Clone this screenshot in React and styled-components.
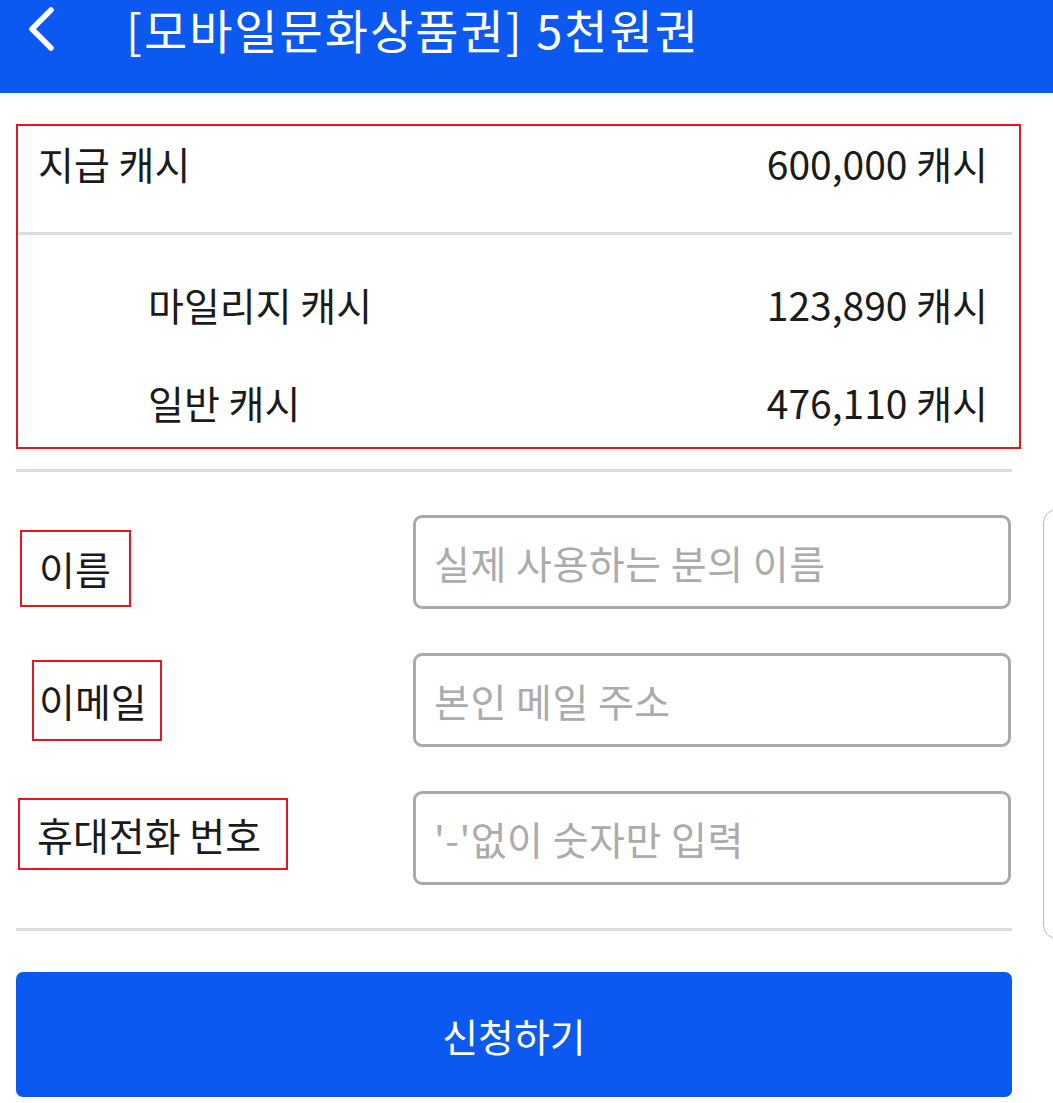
import React from 'react';
import styled, {createGlobalStyle} from 'styled-components';

const GlobalStyle = createGlobalStyle`
  html, body {
    margin: 0;
    padding: 0;
    background: #ffffff;
    overflow-x: hidden;
  }

  body {
    font-family: "Noto Sans CJK KR", "Noto Sans", sans-serif;
    color: #1b1b1b;
  }
`;

const Header = styled.header`
  display: flex;
  align-items: center;

  height: 93px;
  padding: 0 0 35px 24px;
  box-sizing: border-box;

  background: #0b59f0;
  color: #ffffff;
`;

const BackButton = styled.div`
  display: flex;
  align-items: center;
  justify-content: center;

  width: 36px;
  height: 58px;
`;

const Title = styled.h1`
  margin: 0 0 0 66px;

  font-size: 47px;
  font-weight: 400;
  line-height: 58px;
  letter-spacing: 2px;
  white-space: nowrap;
`;

const Main = styled.main`
  display: flex;
  padding-left: 16px;
`;

const Content = styled.div`
  flex: none;
  width: 996px;
`;

const SummaryBox = styled.section`
  margin: 31px -9px 0 0;
  border: 2px solid #e5161d;
`;

const Row = styled.div`
  display: flex;
  justify-content: space-between;

  padding: ${({$top}) => $top}px 31px 0 ${({$indent}) => $indent}px;
  height: ${({$height}) => $height}px;
  box-sizing: border-box;

  font-size: 39px;
  line-height: 44px;
`;

const InnerDivider = styled.div`
  margin-right: 7px;
  height: 3px;
  background: #dddddd;
`;

const Divider = styled.div`
  margin-top: ${({$top}) => $top}px;
  height: 3px;
  background: #dddddd;
`;

const Form = styled.div`
  display: flex;
  flex-direction: column;
  gap: 44px;

  margin-top: 43px;
`;

const FormRow = styled.div`
  display: grid;
  grid-template-columns: 397px 1fr;
  align-items: center;

  height: 94px;
`;

const LabelBox = styled.label`
  display: flex;
  align-items: center;

  margin: ${({$dy}) => $dy}px 0 0 ${({$dx}) => $dx}px;
  width: ${({$w}) => $w}px;
  height: ${({$h}) => $h}px;
  padding-left: ${({$pl}) => $pl}px;
  box-sizing: border-box;

  border: 2px solid #e5161d;

  font-size: 39px;
  white-space: nowrap;
`;

const Input = styled.input`
  width: 598px;
  height: 94px;
  padding: 0 18px;
  box-sizing: border-box;

  border: 3px solid #aaaaaa;
  border-radius: 9px;
  outline: none;

  font-family: "Noto Sans CJK KR", "Noto Sans", sans-serif;
  font-size: 39px;
  letter-spacing: 0.5px;
  color: #1b1b1b;

  &::placeholder {
    color: #ababab;
  }
`;

const SubmitButton = styled.button`
  display: block;

  margin-top: 41px;
  width: 100%;
  height: 125px;

  border: none;
  border-radius: 7px;
  background: #0b59f0;

  font-family: "Noto Sans CJK KR", "Noto Sans", sans-serif;
  font-size: 39px;
  color: #ffffff;
`;

const SidePeek = styled.div`
  flex: none;

  margin: 416px 0 0 31px;
  width: 40px;
  height: 428px;

  border: 1.5px solid #bbbbbb;
  border-radius: 14px;
`;

const fields = [
  {label: '이름', placeholder: '실제 사용하는 분의 이름', dx: 4, dy: 12, w: 111, h: 77, pl: 17},
  {label: '이메일', placeholder: '본인 메일 주소', dx: 16, dy: 0, w: 130, h: 81, pl: 5},
  {label: '휴대전화 번호', placeholder: "'-'없이 숫자만 입력", dx: 2, dy: -8, w: 270, h: 72, pl: 17},
];

const App = () => {
  return (
    <>
      <GlobalStyle/>
      <Header>
        <BackButton>
          <svg width="32" height="46" viewBox="0 0 32 46">
            <polyline points="25,4 6,23 25,42" fill="none" stroke="#ffffff" strokeWidth="5.5" strokeLinecap="round" strokeLinejoin="round"/>
          </svg>
        </BackButton>
        <Title>[모바일문화상품권] 5천원권</Title>
      </Header>

      <Main>
        <Content>
          <SummaryBox>
            <Row $indent={20} $top={15} $height={106}>
              <span>지급 캐시</span>
              <span>600,000 캐시</span>
            </Row>
            <InnerDivider/>
            <Row $indent={130} $top={47} $height={98}>
              <span>마일리지 캐시</span>
              <span>123,890 캐시</span>
            </Row>
            <Row $indent={130} $top={47} $height={114}>
              <span>일반 캐시</span>
              <span>476,110 캐시</span>
            </Row>
          </SummaryBox>

          <Divider $top={20}/>

          <Form>
            {fields.map((field) => (
              <FormRow key={field.label}>
                <LabelBox $dx={field.dx} $dy={field.dy} $w={field.w} $h={field.h} $pl={field.pl}>
                  {field.label}
                </LabelBox>
                <Input placeholder={field.placeholder}/>
              </FormRow>
            ))}
          </Form>

          <Divider $top={43}/>

          <SubmitButton>신청하기</SubmitButton>
        </Content>

        <SidePeek/>
      </Main>
    </>
  );
};

export default App;
